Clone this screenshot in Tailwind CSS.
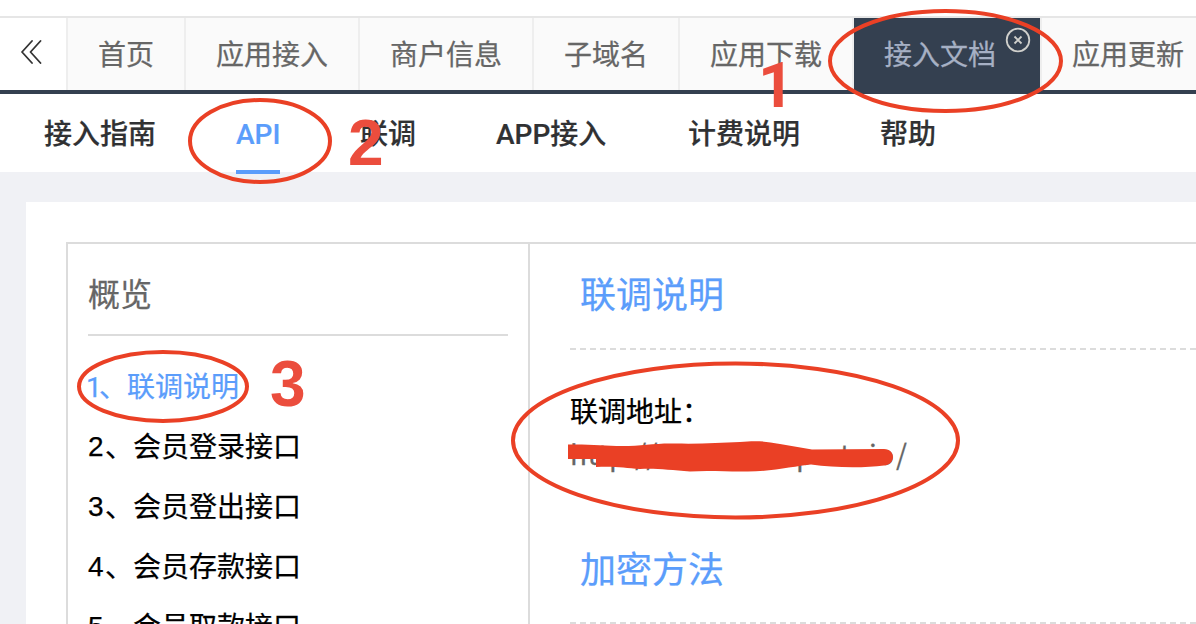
<!DOCTYPE html>
<html lang="zh-CN">
<head>
<meta charset="utf-8">
<title>接入文档</title>
<script src="https://cdn.jsdelivr.net/npm/@tailwindcss/browser@4"></script>
</head>
<body class="relative flex h-[624px] w-[1196px] flex-col overflow-hidden bg-[#f0f1f5] font-['Liberation_Sans','Noto_Sans_CJK_SC',sans-serif] text-[28px] leading-[40px] text-[#666] [-webkit-text-stroke:0.25px]">
  <div class="h-[18px] shrink-0 border-b-2 border-[#e6e6e6] bg-white"></div>
  <nav class="flex h-[76px] shrink-0 border-b-4 border-[#344050] bg-[#fafafa] whitespace-nowrap">
    <div class="flex w-[68px] shrink-0 items-start border-r-2 border-[#eee] bg-white pt-[22px] pl-5">
      <svg class="h-6 w-[22px]" viewBox="0 0 22 24" fill="none" stroke="#333" stroke-width="1.8" stroke-linecap="round" stroke-linejoin="round"><path d="M12 1 2 12l10 11M20.500 1l-10 11 10 11"/></svg>
    </div>
    <a class="shrink-0 border-r-2 border-[#eee] px-[30px] pt-[18px]">首页</a>
    <a class="shrink-0 border-r-2 border-[#eee] px-[30px] pt-[18px]">应用接入</a>
    <a class="shrink-0 border-r-2 border-[#eee] px-[30px] pt-[18px]">商户信息</a>
    <a class="shrink-0 border-r-2 border-[#eee] px-[30px] pt-[18px]">子域名</a>
    <a class="shrink-0 border-r-2 border-[#eee] px-[30px] pt-[18px]">应用下载</a>
    <a class="flex w-[188px] shrink-0 border-r-2 border-[#eee] bg-[#344050] bg-clip-padding pt-[18px] pl-[30px] text-[#a6b0c4]">接入文档
      <svg class="-mt-[9px] ml-[9px] size-[26px] shrink-0" viewBox="0 0 26 26" fill="none" stroke="#d0d0cc" stroke-width="1.8"><circle cx="13" cy="13" r="11.300"/><path d="m9.500 9.500 7 7m0-7-7 7"/></svg>
    </a>
    <a class="shrink-0 px-[30px] pt-[18px]">应用更新</a>
  </nav>
  <nav class="flex h-[78px] shrink-0 gap-20 bg-white pt-[21px] pl-11 font-['Roboto','Noto_Sans_CJK_SC',sans-serif] font-medium whitespace-nowrap text-[#303133] [-webkit-text-stroke:0.2px]">
    <a class="w-28">接入指南</a>
    <a class="h-[59px] w-11 border-b-4 border-[#5b9dfb] text-[#5b9dfb]">API</a>
    <a class="w-14">联调</a>
    <a class="w-28">APP接入</a>
    <a class="w-28">计费说明</a>
    <a class="w-14">帮助</a>
  </nav>
  <main class="mt-[30px] ml-[26px] min-h-0 flex-1 overflow-hidden bg-white pt-10 pl-10">
    <div class="flex h-[500px] border-t-2 border-l-2 border-[#dcdcdc]">
      <aside class="w-[462px] shrink-0 border-r-2 border-[#dcdcdc] px-5 text-black">
        <h2 class="h-[92px] border-b-2 border-[#dcdcdc] pt-[31px] text-[32px] text-[#666]">概览</h2>
        <ul class="pt-[22px] leading-[60px]">
          <li class="flex text-[#5b9dfb]"><span class="-ml-0.5 w-[13px] shrink-0 font-['Roboto']">1</span>、联调说明</li>
          <li class="flex"><span class="-mt-px w-[17px]">2</span>、会员登录接口</li>
          <li class="flex"><span class="-mt-px w-[17px]">3</span>、会员登出接口</li>
          <li class="flex"><span class="-mt-px w-[17px]">4</span>、会员存款接口</li>
          <li class="flex"><span class="-mt-px w-[17px]">5</span>、会员取款接口</li>
        </ul>
      </aside>
      <section class="flex-1 pl-10">
        <h2 class="h-[104px] pt-8 pl-2.5 text-[36px] text-[#5b9dfb]">联调说明</h2>
        <div class="h-0.5 bg-[repeating-linear-gradient(90deg,#dcdcdc_0_6px,transparent_6px_10px)]"></div>
        <p class="pt-[43px] leading-[40px] text-black">联调地址：</p>
        <p class="flex h-[43px] font-['Noto_Sans_CJK_SC']"><span class="w-[226px] tracking-[0.5px]">http://</span><span class="w-[44px]">p</span><span class="w-[29px]">t</span><span class="w-[8px]">i</span><span class="w-[19px]">o</span><span>/</span></p>
        <h2 class="h-[146px] pt-[75px] pl-2.5 text-[36px] text-[#5b9dfb]">加密方法</h2>
        <div class="h-0.5 bg-[repeating-linear-gradient(90deg,#dcdcdc_0_6px,transparent_6px_10px)]"></div>
      </section>
    </div>
  </main>
  <svg class="absolute inset-0 h-[624px] w-[1196px] [-webkit-text-stroke:0]" viewBox="0 0 1196 624" fill="none" stroke="#ea4025" stroke-width="4">
    <ellipse cx="945.500" cy="61" rx="115.500" ry="50"/>
    <ellipse cx="260" cy="141" rx="70" ry="41"/>
    <ellipse cx="163" cy="386.500" rx="84" ry="34.500"/>
    <ellipse cx="735.500" cy="440.500" rx="222.500" ry="77"/>
    <path fill="#ea4025" stroke="none" d="M568 444.500C590 444 605 446 622 446C642 446 655 443 675 443.500C700 444 720 443 740 442C755 440.500 765 441 780 444L812 449.500L884 449C896 449 896 465 884 465.500C865 468 835 468 811 464.500C795 466 770 472 745 471.500C730 472 710 470 690 471.500C670 470 655 468 640 469C625 468 615 466 596 467V459H568Z"/>
    <g fill="#eb4d3d" stroke="none" font-family="Liberation Sans, sans-serif" font-weight="700" font-size="64">
      <text x="758" y="107" font-family="Roboto, sans-serif" font-size="63">1</text>
      <text x="348" y="165">2</text>
      <text x="270" y="406">3</text>
    </g>
  </svg>
</body>
</html>
